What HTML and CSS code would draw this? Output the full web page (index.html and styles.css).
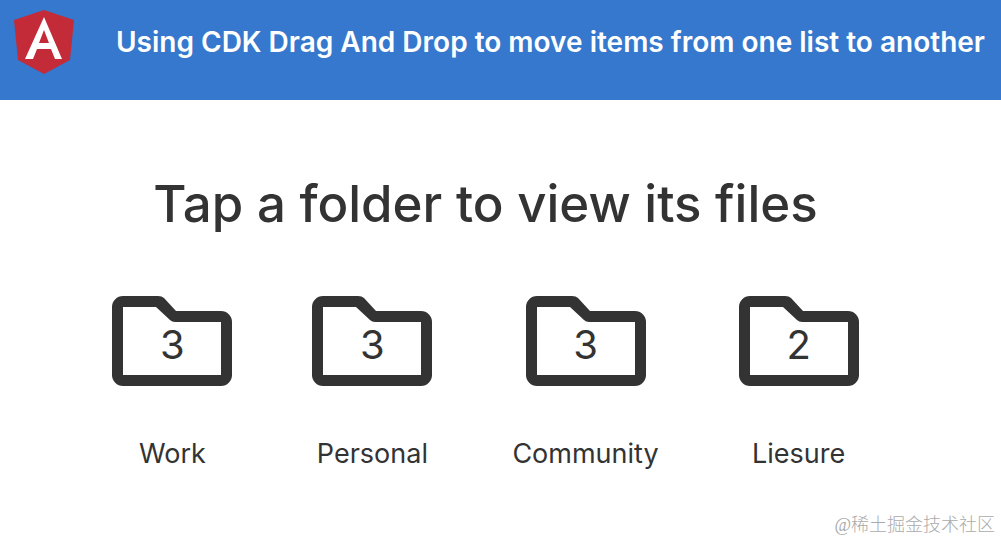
FILE: index.html
```
<!DOCTYPE html>
<html lang="en">
<head>
  <meta charset="utf-8">
  <title>CDK Drag And Drop</title>
  <link rel="stylesheet" href="styles.css">
</head>
<body>
  <svg class="defs" aria-hidden="true">
    <symbol id="folder" viewBox="0 0 120 90">
      <path fill-rule="evenodd" d="M11 0H46Q50 0 52 2L64 15H109A11 11 0 0 1 120 26V79A11 11 0 0 1 109 90H11A11 11 0 0 1 0 79V11A11 11 0 0 1 11 0ZM11 11V79H109V26H63Q60 26 58 24L44 11Z"/>
    </symbol>
  </svg>

  <header class="toolbar">
    <svg class="logo" viewBox="0 0 60 64" aria-hidden="true">
      <path fill="#c32b38" d="M30 0L60 10L56 50L30 64L4 50L0 10Z"/>
      <path fill="#fff" fill-rule="evenodd" d="M30 7L48 49H41L37 39H23L19 49H11ZM30 20L25 33H35Z"/>
    </svg>
    <span class="toolbar-title">Using CDK Drag And Drop to move items from one list to another</span>
  </header>

  <main class="content">
    <h1>Tap a folder to view its files</h1>
    <div class="folders">
      <button class="folder" type="button">
        <span class="folder-icon"><svg><use href="#folder"/></svg><span class="count">3</span></span>
        <span class="folder-name">Work</span>
      </button>
      <button class="folder" type="button">
        <span class="folder-icon"><svg><use href="#folder"/></svg><span class="count">3</span></span>
        <span class="folder-name">Personal</span>
      </button>
      <button class="folder" type="button">
        <span class="folder-icon"><svg><use href="#folder"/></svg><span class="count">3</span></span>
        <span class="folder-name">Community</span>
      </button>
      <button class="folder" type="button">
        <span class="folder-icon"><svg><use href="#folder"/></svg><span class="count">2</span></span>
        <span class="folder-name">Liesure</span>
      </button>
    </div>
  </main>

  <footer class="credit" lang="zh-CN">@稀土掘金技术社区</footer>
</body>
</html>
```

FILE: styles.css
```
* {
  box-sizing: border-box;
}
body {
  margin: 0;
  min-height: 100vh;
  display: flex;
  flex-direction: column;
  font-family: Inter, "Liberation Sans", sans-serif;
  color: #333;
  background: #fff;
}
.defs {
  display: none;
}
.toolbar {
  display: flex;
  align-items: flex-start;
  gap: 42px;
  padding: 10px 14px 26px;
  color: #fff;
  background: #3578cd;
}
.logo {
  flex: none;
  width: 60px;
  height: 64px;
}
.toolbar-title {
  font-size: 28px;
  line-height: 64px;
  font-weight: 600;
  white-space: nowrap;
}
.content {
  padding: 72px 30px 0 0;
  text-align: center;
}
h1 {
  margin: 0;
  font-size: 51px;
  line-height: 64px;
  font-weight: 500;
}
.folders {
  display: flex;
  justify-content: center;
  gap: 80px;
  margin-top: 60px;
}
.folder {
  display: flex;
  flex-direction: column;
  align-items: center;
  gap: 50px;
  min-width: 120px;
  padding: 0;
  border: 0;
  background: none;
  font: inherit;
  color: inherit;
  cursor: pointer;
}
.folder-icon {
  display: grid;
  place-items: center;
}
.folder-icon svg {
  grid-area: 1 / 1;
  width: 120px;
  height: 90px;
  fill: currentColor;
}
.count {
  grid-area: 1 / 1;
  padding-top: 8px;
  font-size: 40px;
  line-height: 48px;
}
.folder-name {
  font-size: 27px;
  line-height: 36px;
}
.credit {
  margin-top: auto;
  padding: 0 6px 4px;
  text-align: right;
  font-family: "Liberation Serif", "Noto Sans CJK SC", sans-serif;
  font-size: 18px;
  font-weight: 300;
  line-height: 24px;
  color: #aaa;
}
```
